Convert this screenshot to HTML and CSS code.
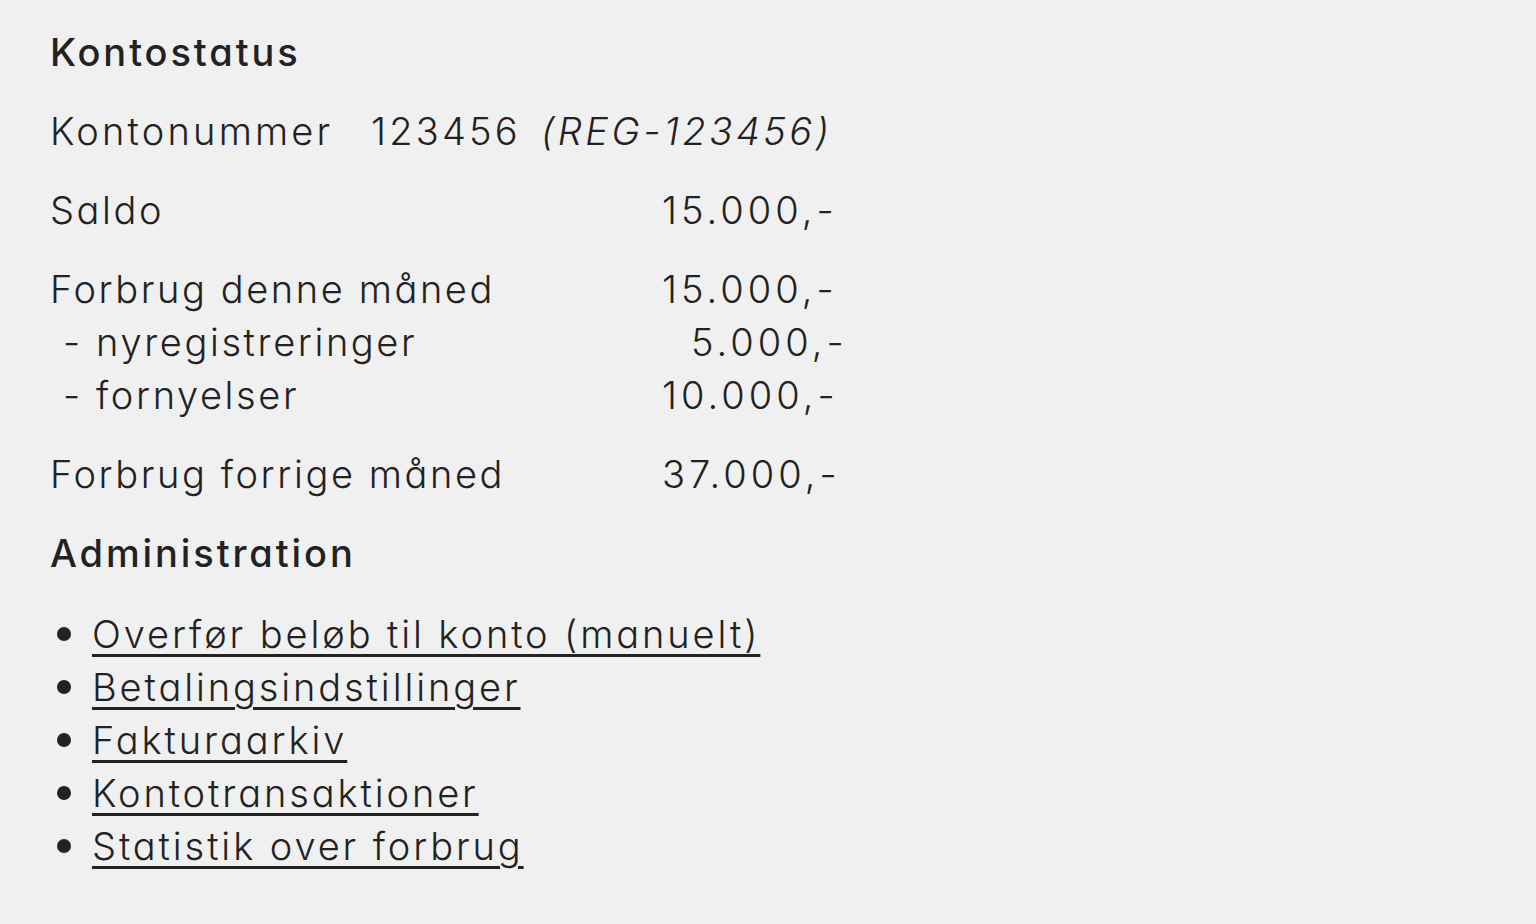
FILE: index.html
```html
<!DOCTYPE html>
<html lang="da">
<head>
  <meta charset="UTF-8">
  <title>Kontostatus</title>
  <link rel="stylesheet" href="styles.css">
</head>
<body>

<main class="page">
  <h2>Kontostatus</h2>

  <div class="account-no">
    <span class="no-label">Kontonummer</span>
    <span class="no-value">123456</span>
    <em>(REG-123456)</em>
  </div>

  <div class="group">
    <div class="row"><span class="label">Saldo</span><span class="amount">15.000,-</span></div>
  </div>

  <div class="group">
    <div class="row"><span class="label">Forbrug denne måned</span><span class="amount">15.000,-</span></div>
    <div class="row sub"><span class="label">- nyregistreringer</span><span class="amount pad">5.000,-</span></div>
    <div class="row sub"><span class="label">- fornyelser</span><span class="amount">10.000,-</span></div>
  </div>

  <div class="group">
    <div class="row"><span class="label">Forbrug forrige måned</span><span class="amount">37.000,-</span></div>
  </div>

  <h2>Administration</h2>

  <ul class="links">
    <li><a href="#">Overfør beløb til konto (manuelt)</a></li>
    <li><a href="#">Betalingsindstillinger</a></li>
    <li><a href="#">Fakturaarkiv</a></li>
    <li><a href="#">Kontotransaktioner</a></li>
    <li><a href="#">Statistik over forbrug</a></li>
  </ul>
</main>

</body>
</html>
```

FILE: styles.css
```css
body { margin: 0; background: #f0f0f0; color: #222; font-family: Inter, "Noto Sans", sans-serif; font-weight: 300; font-size: 38px; line-height: 53px; letter-spacing: 2.6px; font-feature-settings: "cv11"; }
.page { padding: 26px 50px; }
h2 { margin: 0 0 26px; font-size: 38px; font-weight: 500; line-height: 53px; letter-spacing: 2.9px; }
.account-no { display: flex; margin-bottom: 26px; letter-spacing: 3.2px; }
.no-label { width: 321px; }
.no-value { width: 170px; }
.account-no em { letter-spacing: 3.5px; }
.group { margin-bottom: 26px; }
.row { display: flex; }
.row .label { width: 612px; }
.row.sub .label { padding-left: 13px; width: 599px; }
.amount { letter-spacing: 4px; }
.amount.pad { padding-left: 29px; }
.links { margin: 0; padding: 0 0 0 42px; }
.links li { height: 53px; line-height: 53px; }
.links li::marker { font-size: 44px; }
.links a { color: #222; letter-spacing: 2.9px; text-decoration-thickness: 3px; text-underline-offset: 6px; }
```
